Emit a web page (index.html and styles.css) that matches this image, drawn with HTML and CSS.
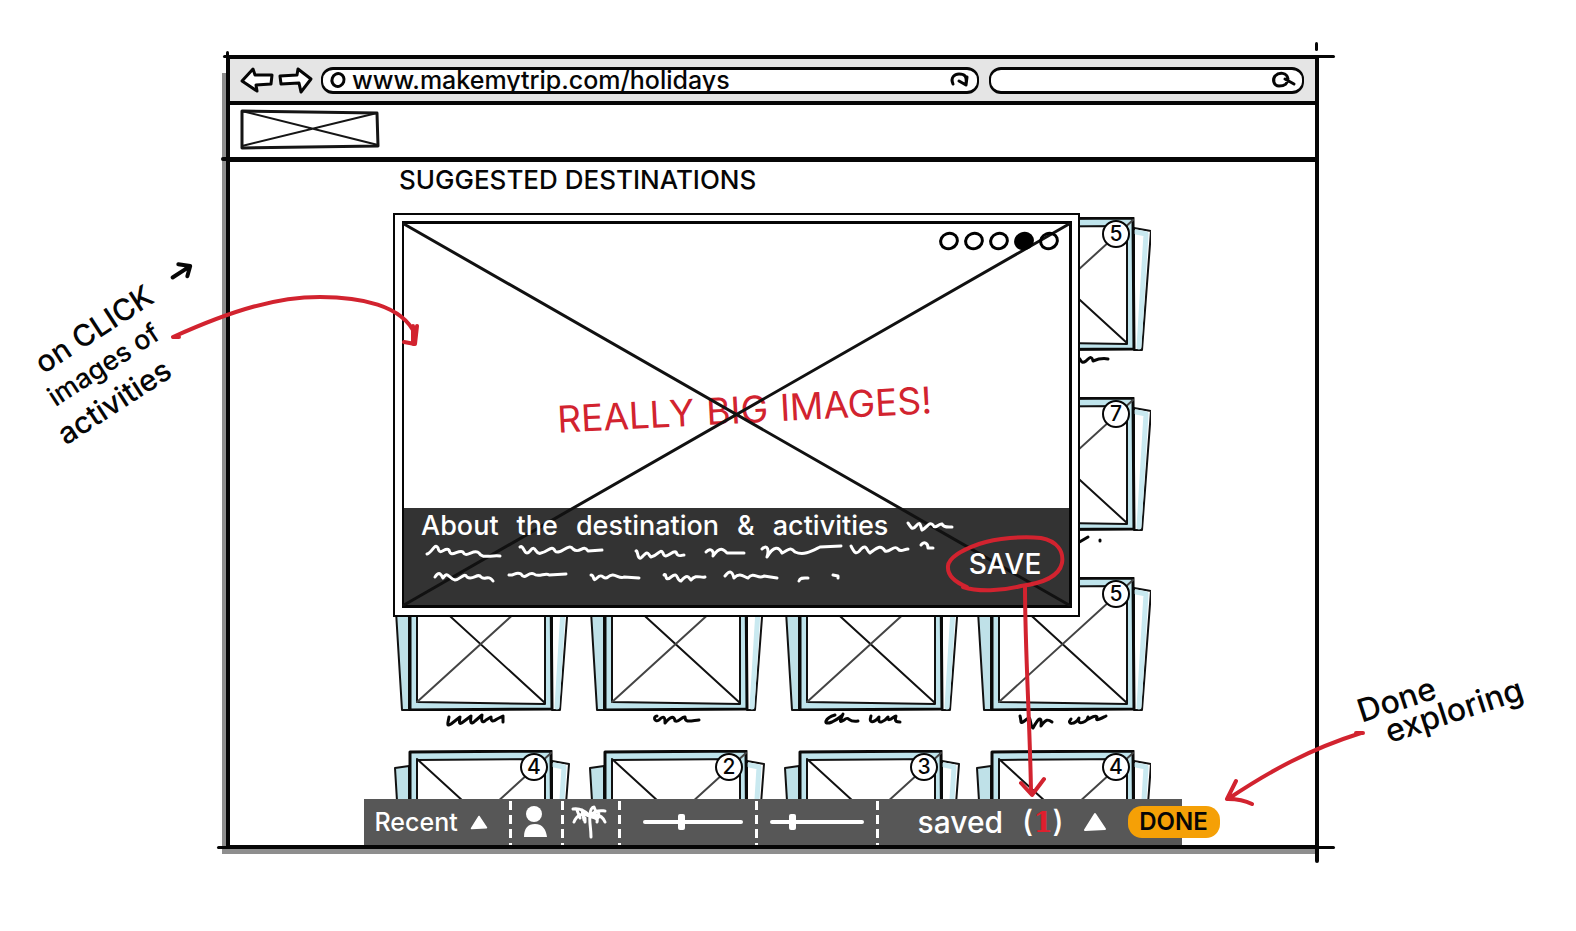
FILE: index.html
```html
<!DOCTYPE html>
<html lang="en">
<head>
<meta charset="utf-8">
<title>Suggested destinations</title>
<link rel="stylesheet" href="styles.css">
</head>
<body>
<svg class="defs" aria-hidden="true">
  <symbol id="stack" viewBox="0 0 176 134">
    <path d="M1 18L15 16V133H8Z" fill="#bfe1e8" stroke="#111" stroke-width="2"/>
    <path d="M158 11L175 14L166 133H158Z" fill="#fff" stroke="#111" stroke-width="2"/>
    <path d="M160 15L170 17L163 130" fill="none" stroke="#c9e9f0" stroke-width="5"/>
    <path d="M16 2L157 1L158 132L16 133Z" fill="#bfe4ec" stroke="#0a0a0a" stroke-width="3"/>
    <path d="M23 10L151 9V127L23 125Z" fill="#fff" stroke="#111" stroke-width="2"/>
    <path d="M23 9L151 126" stroke="#111" stroke-width="2"/>
    <path d="M23 125L157 3" stroke="#444" stroke-width="2"/>
  </symbol>
  <symbol id="triangle" viewBox="0 0 24 20"><path d="M12 2L22 17L2 18Z" fill="#fff" stroke="#fff" stroke-width="2" stroke-linejoin="round"/></symbol>
  <symbol id="dot" viewBox="0 0 22 22"><ellipse cx="11" cy="11" rx="8.500" ry="7.500" transform="rotate(-20 11 11)" stroke="#000" stroke-width="3"/></symbol>
</svg>

<div class="page">
  <aside class="note note-left">
    <p class="note-text">
      <span class="line line-a">on CLICK
        <svg class="note-arrow" viewBox="0 0 26 22"><path d="M2 11H22M14 3L23 11L15 18" /></svg>
      </span>
      <span class="line line-b">images of</span>
      <span class="line">activities</span>
    </p>
  </aside>

  <div class="browser">
    <i class="tick tick-top"></i><i class="tick tick-head"></i><i class="tick tick-bottom"></i>
    <i class="tick tick-left"></i><i class="tick tick-right"></i><i class="tick tick-blip"></i>

    <div class="chrome">
      <button class="nav" aria-label="Back"><svg viewBox="0 0 34 28"><path d="M2 15L13 3L15 9L32 9L31 18L16 19L17 25Z"/></svg></button>
      <button class="nav" aria-label="Forward"><svg viewBox="0 0 34 28"><path d="M1 10L18 9L19 3L32 13L22 26L20 17L2 18Z"/></svg></button>
      <div class="field address">
        <svg class="site" viewBox="0 0 16 16"><ellipse cx="8" cy="8" rx="6" ry="6.500" transform="rotate(20 8 8)"/></svg>
        <input type="text" aria-label="Address" value="www.makemytrip.com/holidays">
        <button class="icon" aria-label="Reload"><svg viewBox="0 0 20 18"><path d="M3 13C0 6 5 3 9 3C15 3 17 5 16 14M9 10L16 14L17 6"/></svg></button>
      </div>
      <div class="field search">
        <input type="text" aria-label="Search">
        <button class="icon" aria-label="Search"><svg viewBox="0 0 24 18"><path d="M17 8C16 1 8 1 4 5C1 9 3 15 8 15C14 15 17 12 17 8ZM14 8L23 13"/></svg></button>
      </div>
    </div>

    <header class="header">
      <svg class="logo" viewBox="0 0 140 40" aria-label="Logo">
        <path d="M2 2L137 4L138 37L2 39Z" stroke-width="3"/><path d="M2 2L138 36M2 37L137 4" stroke-width="2"/>
      </svg>
    </header>

    <main class="content">
      <h1 class="title">SUGGESTED DESTINATIONS</h1>
      <div class="gallery">
        <ul class="cards">
          <li class="card last-col"><svg class="stack"><use href="#stack"/></svg><span class="badge">5</span>
            <svg class="scribble" viewBox="0 0 176 20"><path d="M99 7C106 4 103 15 110 10C115 5 116 6 117 10C122 8 127 7 132 8"/></svg></li>
          <li class="card last-col"><svg class="stack"><use href="#stack"/></svg><span class="badge">7</span>
            <svg class="scribble" viewBox="0 0 176 20"><path d="M100 13L112 6M124 9V10"/></svg></li>
          <li class="card"><svg class="stack"><use href="#stack"/></svg>
            <svg class="scribble" viewBox="0 0 176 20"><path d="M55 6C54 12 52 16 57 13L66 6C65 12 65 14 69 11L77 5C76 12 77 14 81 10L88 4C87 10 88 13 92 9L97 6C97 11 99 11 103 8L109 5V11"/></svg></li>
          <li class="card"><svg class="stack"><use href="#stack"/></svg>
            <svg class="scribble" viewBox="0 0 176 20"><path d="M68 5C64 5 65 12 70 9C75 4 76 6 76 12C81 6 85 4 86 10C90 12 93 5 96 6C96 12 101 10 110 9"/></svg></li>
          <li class="card"><svg class="stack"><use href="#stack"/></svg>
            <svg class="scribble" viewBox="0 0 176 20"><path d="M51 4C41 7 38 15 48 11C54 8 59 4 59 3C57 8 54 13 60 9C66 4 63 12 74 10M87 5C84 14 91 11 95 6C93 15 101 10 104 6C103 13 111 4 112 5C110 11 113 11 116 11"/></svg></li>
          <li class="card"><svg class="stack"><use href="#stack"/></svg><span class="badge">5</span>
            <svg class="scribble" viewBox="0 0 176 20"><path d="M44 5C46 12 43 14 51 8C56 4 53 14 57 17C62 8 66 3 65 15C70 8 72 8 76 11M95 8C90 14 99 14 103 7C100 16 113 10 112 6C109 13 118 2 121 6C119 11 124 8 130 5"/></svg></li>
          <li class="card"><svg class="stack"><use href="#stack"/></svg><span class="badge">4</span></li>
          <li class="card"><svg class="stack"><use href="#stack"/></svg><span class="badge">2</span></li>
          <li class="card"><svg class="stack"><use href="#stack"/></svg><span class="badge">3</span></li>
          <li class="card"><svg class="stack"><use href="#stack"/></svg><span class="badge">4</span></li>
        </ul>

        <section class="modal">
          <div class="picture">
            <p class="shout"><span>REALLY</span> <span>BIG</span> <span>IMAGES!</span></p>
            <svg class="cross" viewBox="0 0 664 380" preserveAspectRatio="none">
              <path d="M0 0L664 380M0 380L664 0" stroke-width="3"/>
            </svg>
            <div class="dots">
              <button aria-label="Image 1"><svg><use href="#dot"/></svg></button>
              <button aria-label="Image 2"><svg><use href="#dot"/></svg></button>
              <button aria-label="Image 3"><svg><use href="#dot"/></svg></button>
              <button aria-label="Image 4" class="on"><svg><use href="#dot"/></svg></button>
              <button aria-label="Image 5"><svg><use href="#dot"/></svg></button>
            </div>
            <div class="caption">
              <div class="about">
                <p class="about-line"><span>About</span> <span>the</span> <span>destination</span> <span>&amp;</span> <span>activities</span>
                  <svg class="trail" viewBox="0 0 48 16"><path d="M2 5C5 9 6 13 10 8C15 2 14 8 16 12C21 10 23 3 27 7C29 12 33 5 36 6C38 10 42 9 46 9"/></svg></p>
                <svg class="lorem" viewBox="421 540 540 48">
                  <path d="M427 554C432 553 435 542 438 548C440 557 445 546 449 550C451 559 458 549 463 552C466 559 474 548 479 553C482 559 490 555 500 556"/>
                  <path d="M520 547C524 544 524 558 530 551C536 543 535 556 541 553C548 552 552 544 555 551C560 556 569 542 573 549C580 555 583 543 588 551L602 550"/>
                  <path d="M636 551C638 549 637 562 642 557C649 549 648 555 651 557C658 556 660 548 663 553C665 561 672 550 676 552C678 558 681 555 684 555"/>
                  <path d="M706 552C712 546 714 553 713 556C720 546 723 549 727 553L744 553"/>
                  <path d="M762 549C768 543 769 551 767 557C774 545 779 547 782 553C789 550 790 546 795 552C804 556 812 551 820 547L841 546"/>
                  <path d="M851 546C854 552 856 556 861 549C867 543 867 552 870 553C877 548 881 544 885 551C890 553 894 544 898 549C901 553 904 549 908 549"/>
                  <path d="M921 545C924 541 928 543 928 548H933"/>
                  <path d="M435 577C439 571 441 574 443 578C448 570 449 579 455 580C460 580 464 572 467 577C473 581 478 572 481 577C485 581 488 574 493 581"/>
                  <path d="M509 575C514 576 516 571 521 574C525 581 528 571 534 574C538 578 546 572 549 575L566 574"/>
                  <path d="M591 575C595 575 592 583 597 578C603 572 603 581 608 577C614 571 619 580 624 577L639 578"/>
                  <path d="M664 575C667 572 664 583 671 577C679 571 676 581 681 581C688 573 689 578 691 580C696 574 700 578 705 577"/>
                  <path d="M725 576C730 570 732 571 734 578C740 572 744 577 748 578C754 571 758 580 764 576L777 578M799 581C800 577 804 578 808 578M833 575L838 576V578"/>
                </svg>
              </div>
              <button class="save"><svg class="ring" viewBox="0 0 120 60" preserveAspectRatio="none"><path d="M22 53C12 49 2 43 3 32C4 22 20 15 34 10C52 4 78 2 96 4C112 7 119 17 117 29C114 43 98 49 76 52C57 57 33 58 18 53"/></svg><span>SAVE</span></button>
            </div>
          </div>
        </section>

        <svg class="flow flow-open" viewBox="165 285 256 70"><path d="M173 337C235 309 278 297 320 297C360 297 402 305 415 334M173 337L179 337M417 326L415 344L404 342M413 326V344"/></svg>
        <svg class="flow flow-save" viewBox="1015 585 36 216"><path d="M1025 587C1025 650 1030 725 1031 792M1021 783L1032 795L1044 779"/></svg>
      </div>
    </main>

    <footer class="toolbar">
      <button class="tool recent"><span>Recent</span><svg><use href="#triangle"/></svg></button>
      <button class="tool" aria-label="People"><svg class="person" viewBox="0 0 24 32"><circle cx="11" cy="8" r="8"/><path d="M1 31C1 22 5 18 12 18C20 18 23 24 24 31Z"/></svg></button>
      <button class="tool" aria-label="Beach"><svg class="palm" viewBox="0 0 36 32"><path d="M19 9C18 15 20 22 20 31M18 9C13 4 8 2 2 3M18 10C11 6 6 9 3 16M6 4L9 12M11 4L13 14M14 12V16M19 9C19 4 21 1 23 1L25 6M20 9C25 3 31 5 34 5M20 10C26 8 31 9 34 16M21 11C25 12 27 13 26 16M28 5L27 12"/></svg></button>
      <label class="tool slide slide-wide"><input type="range" min="0" max="100" value="38" aria-label="Budget"></label>
      <label class="tool slide"><input type="range" min="0" max="100" value="22" aria-label="Duration"></label>
      <div class="tool saved">
        <button class="saved-list"><span>saved</span><span class="count">(<b>1</b>)</span><svg><use href="#triangle"/></svg></button>
        <button class="done">DONE</button>
      </div>
    </footer>
  </div>

  <aside class="note note-right">
    <p class="note-text"><span class="line">Done</span><span class="line line-c">exploring</span></p>
    <svg class="flow flow-done" viewBox="1220 725 150 85"><path d="M1361 733C1310 749 1270 771 1228 799M1363 733H1356M1236 781L1227 799M1228 799C1237 799 1246 801 1252 804"/></svg>
  </aside>
</div>
</body>
</html>
```
FILE: styles.css
```css
:root {
  --ink: #060606;
  --red: #d2232f;
  --hand: Inter, "Noto Sans", sans-serif;
}

* { box-sizing: border-box; }

body {
  margin: 0;
  background: #fff;
  color: var(--ink);
  font: 500 25px/28px var(--hand);
}

p, h1, ul { margin: 0; padding: 0; }
button, input { font: inherit; color: inherit; background: none; border: 0; padding: 0; margin: 0; }
svg { display: block; fill: none; overflow: visible; stroke-linecap: round; stroke-linejoin: round; }
.defs { position: absolute; width: 0; height: 0; }

.page {
  display: grid;
  grid-template-columns: 226px minmax(840px, 1fr) 257px;
  padding-bottom: 80px;
}

/* Window frame */
.browser {
  position: relative;
  margin-top: 55px;
  border: 4px solid var(--ink);
  background: #fff;
}
.browser::before {
  content: "";
  position: absolute;
  z-index: -1;
  inset: 14px 0 -9px -8px;
  background: #8e8e8e;
}
.tick { position: absolute; background: var(--ink); border-radius: 2px; }
.tick-top { height: 3px; left: -7px; right: -20px; top: -4px; }
.tick-head { height: 4px; left: -9px; width: 12px; top: 98px; }
.tick-bottom { height: 3px; left: -13px; right: -20px; bottom: -4px; }
.tick-left { width: 3px; left: -4px; top: -8px; height: 12px; }
.tick-right { width: 4px; right: -4px; bottom: -18px; height: 24px; }
.tick-blip { width: 3px; right: -3px; top: -17px; height: 9px; }

.chrome {
  display: flex;
  align-items: center;
  height: 46px;
  padding: 0 11px 0 10px;
  gap: 5px;
  background: #e5e5e5;
  border-bottom: 4px solid var(--ink);
}
.nav { width: 34px; height: 28px; }
.nav svg { width: 34px; height: 28px; fill: #fff; stroke: var(--ink); stroke-width: 3; }
.field {
  display: flex;
  align-items: center;
  min-width: 0;
  height: 27px;
  background: #fff;
  border: 3px solid var(--ink);
  border-left-width: 2px;
  border-right-width: 2px;
  border-radius: 12px;
}
.field input { flex: 1; min-width: 0; height: 21px; outline: 0; }
.address { flex: 665; margin-left: 3px; padding: 0 7px; gap: 6px; }
.search { flex: 309; margin-left: 5px; padding: 0 7px; }
.site { width: 16px; height: 16px; stroke: var(--ink); stroke-width: 3; }
.icon svg { height: 18px; stroke: var(--ink); stroke-width: 3; }
.address .icon svg { width: 20px; }
.search .icon svg { width: 24px; }

.header {
  height: 57px;
  padding: 4px 10px;
  border-bottom: 5px solid var(--ink);
}
.logo { width: 140px; height: 40px; stroke: #151515; }

/* Destinations */
.content { width: 757px; margin: 0 auto; }
.title { padding: 0 5px; font-size: 26px; font-weight: 500; line-height: 36px; white-space: nowrap; }
.gallery { position: relative; margin-top: 19px; }
.cards {
  display: grid;
  grid-template-columns: 177px 177px 174px 175px;
  grid-template-rows: 180px 180px 173px 49px;
  column-gap: 18px;
  overflow: hidden;
  list-style: none;
}
.card { position: relative; }
.last-col { grid-column: 4; }
.stack { width: 176px; height: 134px; }
.badge {
  position: absolute;
  left: 126px;
  top: 3px;
  width: 28px;
  height: 28px;
  border: 2px solid var(--ink);
  border-radius: 50%;
  background: #fff;
  font-size: 21px;
  line-height: 24px;
  text-align: center;
}
.scribble { width: 176px; height: 20px; stroke: var(--ink); stroke-width: 3; }

/* Enlarged picture */
.modal {
  position: absolute;
  left: -1px;
  top: -4px;
  width: 687px;
  height: 404px;
  padding: 6px 6px 7px 7px;
  background: #fff;
  border: 2px solid var(--ink);
}
.picture {
  position: relative;
  display: flex;
  flex-direction: column;
  justify-content: space-between;
  height: 100%;
  border: 3px solid var(--ink);
  border-left-width: 2px;
}
.cross { position: absolute; inset: 0; width: 100%; height: 100%; stroke: #111; pointer-events: none; }
.shout {
  position: absolute;
  left: 23%;
  top: 43%;
  display: flex;
  gap: 12px;
  font-size: 37px;
  line-height: 44px;
  font-weight: 400;
  color: var(--red);
  transform: rotate(-3deg);
  white-space: nowrap;
}
.dots { position: relative; display: flex; justify-content: flex-end; gap: 3px; padding: 6px 9px; }
.dots button, .dots svg { width: 22px; height: 22px; }
.dots .on svg { fill: #000; }
.caption {
  display: flex;
  justify-content: space-between;
  height: 97px;
  padding: 4px 4px 0 17px;
  background: #333;
  color: #fff;
  font-size: 27px;
}
.about, .save { position: relative; z-index: 1; }
.about { flex: 1; min-width: 0; }
.about-line { display: flex; align-items: center; gap: 18px; white-space: nowrap; }
.trail { width: 48px; height: 16px; stroke: #fff; stroke-width: 3; }
.lorem { width: 540px; height: 48px; stroke: #fff; stroke-width: 3; }
.save { width: 120px; height: 60px; margin-top: 22px; font-size: 28px; }
.ring { position: absolute; inset: 0; width: 100%; height: 100%; stroke: var(--red); stroke-width: 4; }

/* Toolbar */
.toolbar {
  position: relative;
  display: grid;
  grid-template-columns: 145px 52px 57px 137px 121px 1fr;
  width: 818px;
  height: 46px;
  margin: 0 auto;
  background: #575757;
  color: #fff;
}
.tool { display: flex; align-items: center; justify-content: center; }
.tool + .tool {
  background: repeating-linear-gradient(#fff 0 9px, transparent 9px 14px) 0 2px / 3px 44px no-repeat;
}
.recent { justify-content: flex-start; padding-left: 11px; gap: 12px; }
.recent svg { width: 18px; height: 15px; }
.person { width: 24px; height: 32px; fill: #fff; }
.palm { width: 36px; height: 32px; stroke: #fff; stroke-width: 3; }
.slide { padding: 0 12px 0 15px; }
.slide-wide { padding-left: 25px; }
.slide input { appearance: none; width: 100%; height: 16px; }
.slide input::-webkit-slider-runnable-track { height: 4px; border-radius: 2px; background: #fff; }
.slide input::-webkit-slider-thumb { appearance: none; width: 7px; height: 16px; margin-top: -6px; border-radius: 2px; background: #fff; }
.saved { justify-content: space-between; padding-left: 42px; margin-right: -38px; font-size: 30px; }
.saved-list { display: flex; align-items: center; gap: 19px; }
.saved-list svg { width: 24px; height: 20px; }
.count b { color: #e01f2d; font: 700 28px/28px "DejaVu Serif", serif; }
.done {
  width: 92px;
  height: 32px;
  border-radius: 14px;
  background: #f5a006;
  color: var(--ink);
  font-size: 24px;
  font-weight: 600;
}

/* Annotations */
.note { position: relative; }
.note-left { padding: 361px 0 0 11px; }
.note-right { padding: 699px 0 0 35px; }
.note-text { width: max-content; transform-origin: 0 0; }
.note-left .note-text { font-size: 30px; line-height: 36px; transform: rotate(-33deg); }
.note-right .note-text { font-size: 32px; line-height: 28px; transform: rotate(-18deg); }
.line { display: flex; align-items: center; gap: 25px; }
.line-a { padding-left: 20px; }
.line-b { padding-left: 12px; font-size: 27px; }
.line-c { padding-left: 20px; }
.note-arrow { width: 26px; height: 22px; stroke: var(--ink); stroke-width: 4; }

.flow { position: absolute; stroke: var(--red); stroke-width: 4; pointer-events: none; }
.flow-open { left: -229px; top: 68px; width: 256px; height: 70px; }
.flow-save { left: 621px; top: 368px; width: 36px; height: 216px; }
.flow-done { left: -99px; top: 725px; width: 150px; height: 85px; }
```
